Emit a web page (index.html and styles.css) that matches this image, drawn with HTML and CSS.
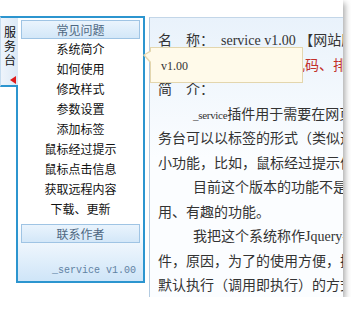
FILE: index.html
```html
<!DOCTYPE html>
<html lang="zh-CN">
<head>
    <meta charset="UTF-8">
    <title>_service 服务台</title>
    <link rel="stylesheet" href="styles.css">
</head>
<body>

    <div class="frame">
        <div class="service">
            <div class="tab">
                <span class="tab-text">服务台</span>
                <span class="arrow"></span>
            </div>
            <div class="box">
                <div class="box-title">常见问题</div>
                <ul class="menu">
                    <li>系统简介</li>
                    <li>如何使用</li>
                    <li>修改样式</li>
                    <li>参数设置</li>
                    <li>添加标签</li>
                    <li>鼠标经过提示</li>
                    <li>鼠标点击信息</li>
                    <li>获取远程内容</li>
                    <li>下载、更新</li>
                </ul>
                <div class="box-title contact">联系作者</div>
                <div class="version">_service v1.00</div>
            </div>
        </div>

        <div class="content">
            <p class="line">名　称：　service v1.00 【网站服务台插件】</p>
            <p class="line">功　能：　可解<span class="red">决中文乱码、排版错乱等问题</span></p>
            <p class="line">简　介：</p>
            <p class="para"><span class="code">_service</span>插件用于需要在网页中添加服<br>务台可以以标签的形式（类似选项卡）展示各种<br>小功能，比如，鼠标经过提示信息等。</p>
            <p class="para">目前这个版本的功能不是很多，但都是一些实<br>用、有趣的功能。</p>
            <p class="para">我把这个系统称作Jquery插件，而不是JS插<br>件，原因，为了的使用方便，插件采用的是<br>默认执行（调用即执行）的方式。</p>
        </div>

        <div class="tip">v1.00</div>
    </div>

</body>
</html>
```

FILE: styles.css
```css
body {
    margin: 0;
    background: #fff;
    font-family: "Noto Sans CJK SC", sans-serif;
}

.frame {
    position: relative;
    width: 343px;
    height: 297px;
    box-sizing: border-box;
    padding-top: 16px;
    display: flex;
    gap: 4px;
    overflow: hidden;
    background: #fff;
    box-shadow: 2px 3px 6px rgba(0, 0, 0, 0.35);
}

/* left service panel */
.service {
    flex: 0 0 145px;
    display: flex;
    align-self: flex-start;
}

.tab {
    position: relative;
    z-index: 1;
    flex: 0 0 auto;
    width: 17px;
    height: 67px;
    margin-right: -2px;
    border-top: 2px solid #2c95cf;
    border-bottom: 2px solid #2c95cf;
    border-left: 1px solid #c6dcef;
    background: linear-gradient(to right, #eef4fb, #dce9f6);
}

.tab-text {
    display: block;
    width: 12px;
    margin: 7px 0 0 3px;
    font-size: 12px;
    line-height: 14px;
    color: #111;
}

.arrow {
    display: block;
    width: 0;
    height: 0;
    margin: 9px 0 0 9px;
    border-top: 4px solid transparent;
    border-bottom: 4px solid transparent;
    border-right: 6px solid #e01b1b;
}

.box {
    flex: 1;
    min-width: 0;
    border: 2px solid #2c95cf;
    padding: 2px 0 1px;
    background: linear-gradient(to bottom, #fff 78%, #cfe5f8);
}

.box-title {
    margin: 0 3px;
    height: 17px;
    line-height: 17px;
    border: 1px solid #9fc4e4;
    background: linear-gradient(to bottom, #eaf4fd, #d3e7f8);
    text-align: center;
    font-size: 12px;
    color: #4f6882;
}

.contact {
    margin-top: 5px;
}

.menu {
    list-style: none;
    margin: 0;
    padding: 0;
}

.menu li {
    height: 20px;
    line-height: 20px;
    text-align: center;
    font-size: 12px;
    color: #111;
}

.version {
    margin-top: 19px;
    padding-right: 7px;
    height: 18px;
    line-height: 18px;
    text-align: right;
    font-family: "Liberation Mono", monospace;
    font-size: 10px;
    color: #5f82a3;
}

/* right content panel */
.content {
    flex: 1;
    min-width: 0;
    overflow: hidden;
    margin-top: 1px;
    padding: 11px 0 0 8px;
    border-left: 1px solid #b3cbe1;
    border-top: 1px solid #c3d6e8;
    background: linear-gradient(to bottom, #e9f2fb, #fbfdff 140px);
    font-family: "Liberation Serif", "Noto Sans CJK SC", serif;
    font-size: 14px;
    line-height: 24.5px;
    color: #333;
    white-space: nowrap;
}

.content p {
    margin: 0;
}

.para {
    text-indent: 35px;
}

.code {
    font-size: 11px;
    letter-spacing: -0.3px;
}

.red {
    color: #c2302a;
}

/* hover tip */
.tip {
    position: absolute;
    left: 150px;
    top: 47px;
    width: 141px;
    height: 34px;
    padding-left: 10px;
    line-height: 37px;
    border: 1px solid #e3d6ae;
    background: #fffaea;
    font-family: "Liberation Serif", serif;
    font-size: 12px;
    color: #333;
}

.tip::before {
    content: "";
    position: absolute;
    left: -8px;
    top: 2px;
    width: 0;
    height: 0;
    border-top: 5px solid transparent;
    border-bottom: 9px solid transparent;
    border-right: 8px solid #e3d6ae;
}

.tip::after {
    content: "";
    position: absolute;
    left: -6px;
    top: 3px;
    width: 0;
    height: 0;
    border-top: 4px solid transparent;
    border-bottom: 8px solid transparent;
    border-right: 7px solid #fffaea;
}
```
